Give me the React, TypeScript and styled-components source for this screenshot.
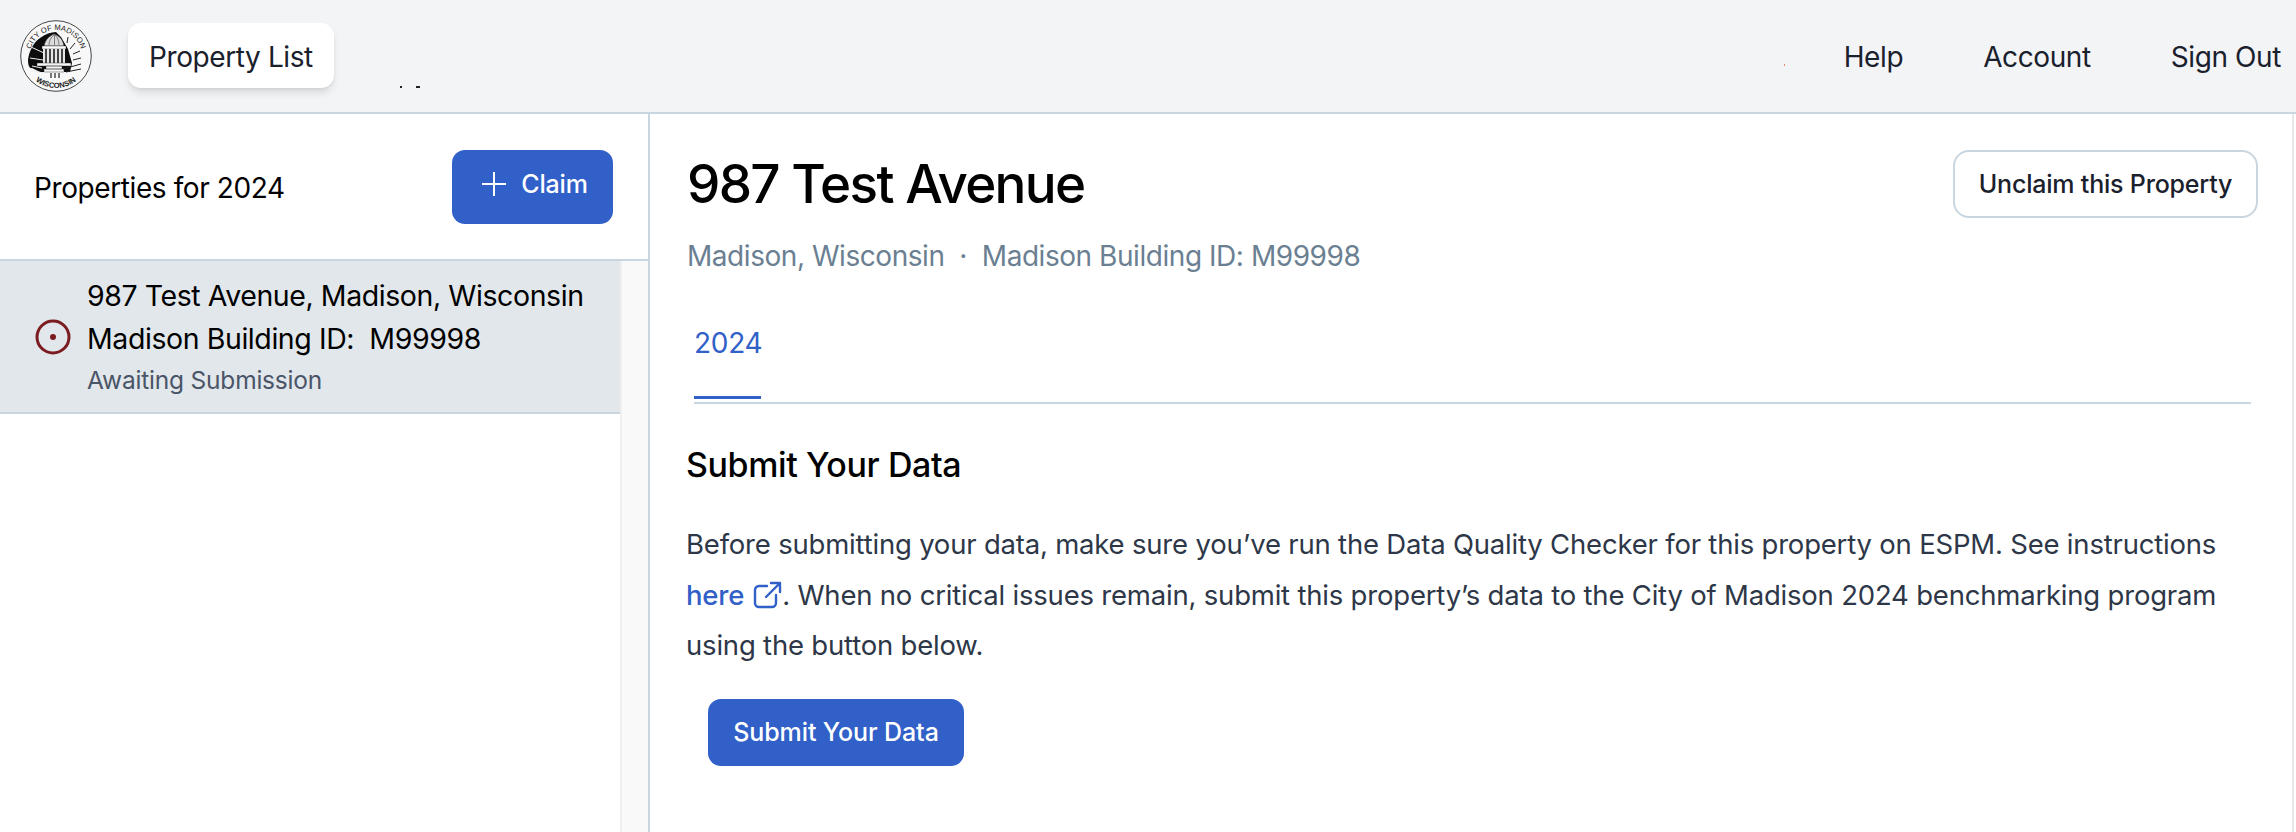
import React from "react";
import styled, { createGlobalStyle } from "styled-components";

const Global = createGlobalStyle`
  html, body { margin: 0; padding: 0; height: 832px; overflow: hidden; background: #fff; }
  body { font-family: Inter, "Liberation Sans", sans-serif; }
  * { box-sizing: border-box; }
`;
const Page = styled.div`display: flex; flex-direction: column; width: 2296px; height: 832px;`;
const Header = styled.header`
  position: relative; display: flex; align-items: center; height: 114px; flex: none;
  background: #f3f4f6; border-bottom: 2px solid #c9d6df; padding: 0 15px 0 20px;
`;
const Seal = styled.svg`width: 72px; height: 72px; flex: none; margin-bottom: 1px;`;
const ActiveNav = styled.a`
  display: flex; align-items: center; height: 65px; margin: 0 0 1px 36px; padding: 2px 21px 0;
  background: #fff; border-radius: 13px; color: #1a202c; font-size: 28px; letter-spacing: -0.4px;
  box-shadow: 0 6px 10px -2px rgba(0,0,0,.12), 0 2px 4px -1px rgba(0,0,0,.07);
`;
const Speck = styled.i<{ $x: number; $y: number; $w: number; $c?: string }>`
  position: absolute; left: ${p => p.$x}px; top: ${p => p.$y}px; width: ${p => p.$w}px; height: 2px;
  background: ${p => p.$c ?? "#222"};
`;
const Nav = styled.nav`display: flex; align-items: center; gap: 80px; margin-left: auto; margin-top: 1px;`;
const NavLink = styled.a`color: #1a202c; font-size: 28px; letter-spacing: -0.4px;`;
const Body = styled.div`display: flex; flex: 1; min-height: 0; padding-right: 2px;`;
const Sidebar = styled.aside`
  width: 650px; flex: none; display: flex; flex-direction: column; border-right: 2px solid #c9d6df;
`;
const SideHead = styled.div`
  height: 147px; flex: none; display: flex; align-items: center; justify-content: space-between;
  padding: 0 35px 0 34px; border-bottom: 2px solid #c9d6df;
`;
const SideTitle = styled.div`font-size: 28px; letter-spacing: -0.4px; color: #000; margin-top: 3px;`;
const Primary = styled.button`
  display: inline-flex; align-items: center; justify-content: center; border: 0; color: #fff;
  background: #3060c8; font-family: inherit; font-weight: 500; border-radius: 13px;
`;
const ClaimButton = styled(Primary)`width: 161px; height: 74px; gap: 15px; font-size: 25px; padding: 0 0 5px 5px; letter-spacing: -0.2px;`;
const SideScroll = styled.div`flex: 1; display: flex; flex-direction: column; background: #fff;`;
const Rows = styled.div`display: flex; flex: 1; `;
const RowCol = styled.div`flex: 1; min-width: 0;`;
const Track = styled.div`width: 28px; flex: none; background: #f9f9f9; border-left: 2px solid #efefef;`;
const Row = styled.div`
  height: 153px; display: flex; align-items: center; gap: 16px; padding-left: 35px;
  background: #e2e7eb; border-bottom: 2px solid #c9d6df;
`;
const RowText = styled.div`display: flex; flex-direction: column;`;
const RowLine = styled.div`font-size: 28.5px; letter-spacing: -0.42px; line-height: 43px; color: #000; white-space: pre;`;
const RowStatus = styled.div`font-size: 24.5px; letter-spacing: -0.2px; line-height: 40px; color: #4a5568;`;
const Main = styled.main`flex: 1; min-width: 0; padding: 0 34px 0 37px; border-right: 2px solid #e8e8e8;`;
const TitleRow = styled.div`display: flex; justify-content: space-between; align-items: flex-start; padding-top: 36px;`;
const Title = styled.h1`margin: 4px 0 0; font-size: 53px; letter-spacing: -1.7px; line-height: 60px; font-weight: 500; color: #000;`;
const Outline = styled.button`
  height: 68px; width: 305px; background: #fff; border: 2px solid #c9d6df; border-radius: 16px;
  color: #1a202c; font-family: inherit; font-size: 25px; letter-spacing: -0.2px; font-weight: 500;
`;
const Sub = styled.div`margin-top: 18px; font-size: 28px; letter-spacing: -0.45px; line-height: 40px; color: #6b7f92; white-space: pre;`;
const Tabs = styled.div`margin: 43px 0 0 7px; width: 1557px; height: 85px; border-bottom: 2px solid #c9d6df;`;
const Tab = styled.div`
  display: inline-flex; height: 80px; width: 67px; padding-top: 4px; color: #3060c8; font-size: 28px;
  letter-spacing: -0.3px; line-height: 40px; border-bottom: 3px solid #3060c8;
`;
const Section = styled.h2`margin: 39px 0 0 -1px; font-size: 34px; letter-spacing: -0.4px; line-height: 44px; font-weight: 500; color: #000;`;
const Para = styled.p`margin: 32px 0 0 -1px; font-size: 27.5px; letter-spacing: -0.2px; line-height: 50.5px; color: #2d3748; white-space: nowrap;`;
const Link = styled.a`color: #3060c8; font-weight: 500; display: inline-flex; align-items: center; gap: 9px;`;
const SubmitButton = styled(Primary)`display: flex; width: 256px; height: 67px; margin: 28px 0 0 21px; font-size: 25px; letter-spacing: -0.1px;`;

function CapitolSeal() {
  return (
    <Seal viewBox="0 0 72 72">
      <defs>
        <path id="sealTop" d="M10 36A26 26 0 0 1 62 36" />
        <path id="sealBottom" d="M4 36A32 32 0 0 0 68 36" />
      </defs>
      <circle cx="36" cy="36" r="35.3" fill="#f8f8f8" stroke="#444" strokeWidth="1" />
      <path d="M8 40C9 31 14 22 20 18 25 14 31 12 36 12l5 5 7 12 4 14-2 9H20l-8-4C9 49 8 44 8 40z" fill="#0d0d0d" />
      <text fontFamily="Liberation Sans, sans-serif" fontSize="7.6" fill="#222" textAnchor="middle">
        <textPath href="#sealTop" startOffset="50%">CITY OF MADISON</textPath>
      </text>
      <text fontFamily="Liberation Sans, sans-serif" fontSize="7.6" fontWeight="700" fill="#222" textAnchor="middle">
        <textPath href="#sealBottom" startOffset="50%">WISCONSIN</textPath>
      </text>
      <path d="M24 26c1-6 5-10 10-12 6 2 9 6 10 12z" fill="#dcdcdc" stroke="#222" strokeWidth=".6" />
      <path d="M29 25c0-4 2-8 5-10M34.500 25V15M39 25c0-4-1-7-4-10" stroke="#555" strokeWidth=".7" fill="none" />
      <rect x="22" y="26" width="24" height="3" fill="#fff" stroke="#222" strokeWidth=".4" />
      <rect x="23" y="29" width="22" height="14" fill="#e6e6e6" />
      <path d="M26 29v14M30 29v14M34 29v14M38 29v14M42 29v14" stroke="#111" strokeWidth="1.5" />
      <path d="M17 43h34v3H17zM26 46h16v3H26zM24 49h20v3H24z" fill="#f4f4f4" stroke="#222" strokeWidth=".4" />
      <path d="M11 27l13 6M10 38l13 2M12 46l10 2M11 51l14 2" stroke="#eee" strokeWidth="1" />
      <path d="M43 49l18-5M46 52l15-3" stroke="#222" strokeWidth="1" />
      <path d="M48 17l-1 6M55 23l-5 6M60 31l-7 3M61 38l-8 2" stroke="#222" strokeWidth="1" />
      <path d="M31 53v5M35 53v5M39 53v5" stroke="#222" strokeWidth="1.2" />
    </Seal>
  );
}

function ClaimPlus() {
  return (
    <svg width="24" height="28" viewBox="0 0 24 28" fill="none" stroke="#fff" strokeWidth="2">
      <path d="M12 2v24M0 14h24" />
    </svg>
  );
}

function StatusIcon() {
  return (
    <svg width="36" height="36" viewBox="0 0 36 36" fill="none" style={{ flex: "none" }}>
      <circle cx="18" cy="18" r="16" stroke="#7b1c20" strokeWidth="3" />
      <circle cx="18" cy="18" r="3" fill="#7b1c20" />
    </svg>
  );
}

function ExternalIcon() {
  return (
    <svg width="29" height="28" viewBox="0 0 29 28" fill="none" stroke="#3060c8" strokeWidth="2.4" strokeLinecap="round" strokeLinejoin="round">
      <path d="M14 5H6a4 4 0 0 0-4 4v13a4 4 0 0 0 4 4h13a4 4 0 0 0 4-4v-8" />
      <path d="M18 2h9v9M27 2L13 16" />
    </svg>
  );
}

export default function App() {
  return (
    <Page>
      <Global />
      <Header>
        <CapitolSeal />
        <ActiveNav>Property List</ActiveNav>
        <Speck $x={400} $y={86} $w={2} />
        <Speck $x={416} $y={86} $w={4} />
        <Speck $x={1784} $y={64} $w={1} $c="#e08a70" />
        <Nav>
          <NavLink>Help</NavLink>
          <NavLink>Account</NavLink>
          <NavLink>Sign Out</NavLink>
        </Nav>
      </Header>
      <Body>
        <Sidebar>
          <SideHead>
            <SideTitle>Properties for 2024</SideTitle>
            <ClaimButton><ClaimPlus />Claim</ClaimButton>
          </SideHead>
          <SideScroll>
            <Rows>
              <RowCol>
                <Row>
                  <StatusIcon />
                  <RowText>
                    <RowLine>987 Test Avenue, Madison, Wisconsin</RowLine>
                    <RowLine>{"Madison Building ID:  M99998"}</RowLine>
                    <RowStatus>Awaiting Submission</RowStatus>
                  </RowText>
                </Row>
              </RowCol>
              <Track />
            </Rows>
          </SideScroll>
        </Sidebar>
        <Main>
          <TitleRow>
            <Title>987 Test Avenue</Title>
            <Outline>Unclaim this Property</Outline>
          </TitleRow>
          <Sub>{"Madison, Wisconsin  ·  Madison Building ID: M99998"}</Sub>
          <Tabs><Tab>2024</Tab></Tabs>
          <Section>Submit Your Data</Section>
          <Para>
            Before submitting your data, make sure you’ve run the Data Quality Checker for this property on ESPM. See instructions<br />
            <Link>here <ExternalIcon /></Link>. When no critical issues remain, submit this property’s data to the City of Madison 2024 benchmarking program<br />
            using the button below.
          </Para>
          <SubmitButton>Submit Your Data</SubmitButton>
        </Main>
      </Body>
    </Page>
  );
}
